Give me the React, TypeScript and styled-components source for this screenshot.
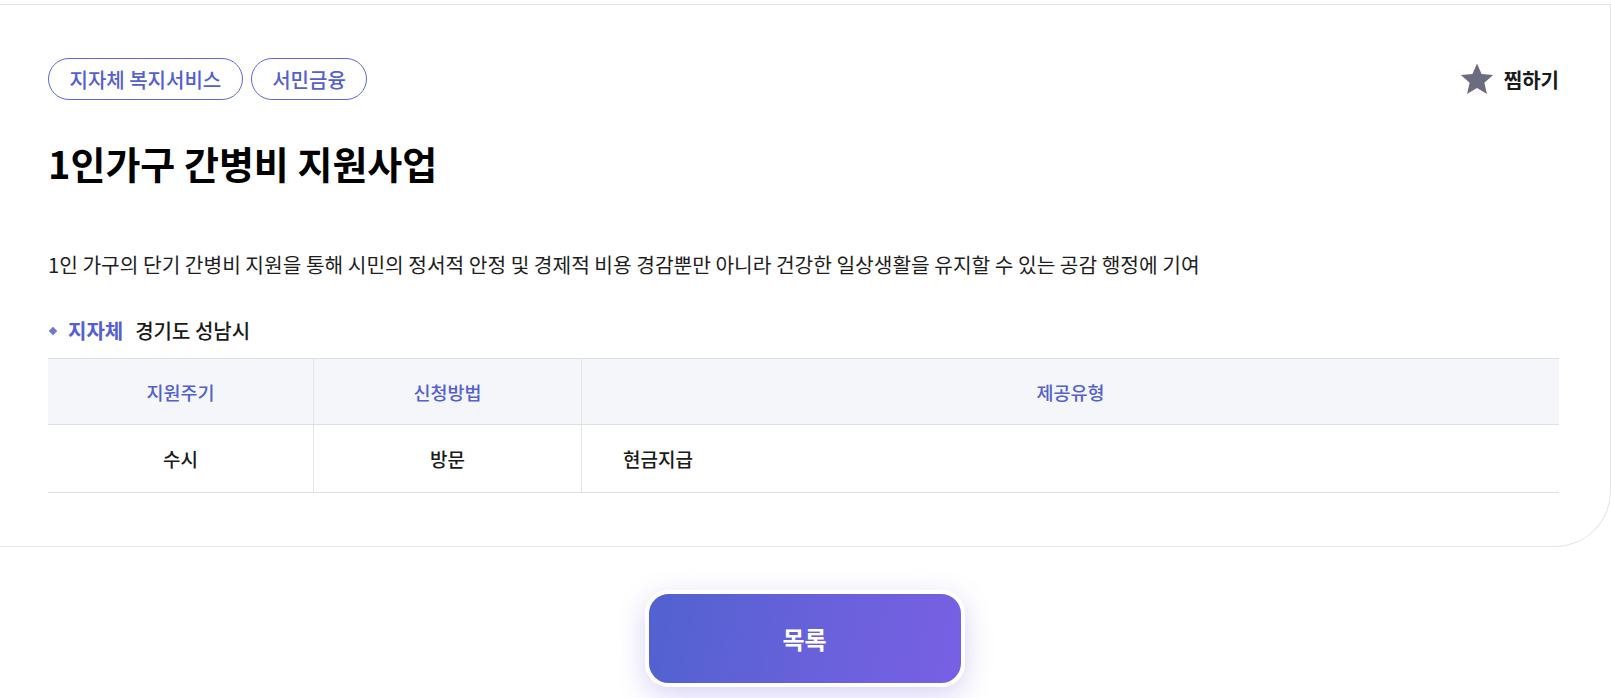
import React from 'react';
import styled, { createGlobalStyle } from 'styled-components';

const GlobalStyle = createGlobalStyle`
  html, body {
    margin: 0;
    padding: 0;
    background: #ffffff;
  }
  body {
    font-family: "Noto Sans CJK KR", "Noto Sans", sans-serif;
    color: #111111;
  }
`;

const Page = styled.div`
  padding-top: 4px;
  overflow: hidden;
`;

const Card = styled.section`
  border-top: 1px solid #e4e4e7;
  border-right: 1px solid #e4e4e7;
  border-bottom: 1px solid #e4e4e7;
  border-bottom-right-radius: 56px;
  padding: 53px 51px 53px 48px;
  background: #ffffff;
`;

const TopRow = styled.div`
  display: flex;
  justify-content: space-between;
  align-items: center;
`;

const Tags = styled.div`
  display: flex;
  gap: 8px;
`;

const Tag = styled.span`
  display: inline-flex;
  align-items: center;
  height: 42px;
  padding: 0 20.5px;
  box-sizing: border-box;
  border: 1px solid #5f6ad6;
  border-radius: 21px;
  color: #5360cf;
  font-size: 20px;
  font-weight: 500;
`;

const Favorite = styled.button`
  display: flex;
  align-items: center;
  gap: 9px;
  padding: 0;
  margin-right: 0;
  border: 0;
  background: none;
  font-family: inherit;
  font-size: 20px;
  font-weight: 600;
  color: #1a1a1a;
  cursor: pointer;
`;

const Title = styled.h1`
  margin: 38px 0 0;
  font-size: 38px;
  font-weight: 700;
  color: #000000;
  line-height: 1.3;
`;

const Description = styled.p`
  margin: 62px 0 0;
  font-size: 20.3px;
  font-weight: 400;
  color: #1e1e1e;
  line-height: 30px;
`;

const Region = styled.div`
  display: flex;
  align-items: center;
  margin-top: 38px;
  font-size: 20px;
  line-height: 1.4;
`;

const Diamond = styled.i`
  width: 6px;
  height: 6px;
  margin: 0 12px 0 2px;
  background: #6c74d8;
  transform: rotate(45deg);
`;

const RegionLabel = styled.span`
  color: #5360cf;
  font-weight: 600;
  margin-right: 12px;
`;

const RegionValue = styled.span`
  color: #1a1a1a;
  font-weight: 500;
`;

const Table = styled.table`
  width: 100%;
  margin-top: 13px;
  border-collapse: collapse;
`;

const HeadCell = styled.th<{ $w?: number }>`
  width: ${(p) => (p.$w ? `${p.$w}px` : 'auto')};
  height: 65px;
  padding: 0;
  background: #f5f6fa;
  color: #5360cf;
  font-size: 18.5px;
  font-weight: 500;
  text-align: center;
  border-top: 1px solid #dedfe4;
  border-bottom: 1px solid #dedfe4;
  & + & {
    border-left: 1px solid #e3e4e8;
  }
`;

const Cell = styled.td<{ $left?: boolean }>`
  height: 67px;
  padding: 0 0 0 ${(p) => (p.$left ? '41px' : '0')};
  color: #1a1a1a;
  font-size: 19px;
  font-weight: 500;
  text-align: ${(p) => (p.$left ? 'left' : 'center')};
  border-bottom: 1px solid #dedfe4;
  & + & {
    border-left: 1px solid #e3e4e8;
  }
`;

const Footer = styled.div`
  display: flex;
  justify-content: center;
  padding: 43px 0 20px;
`;

const ListButton = styled.button`
  width: 320px;
  height: 97px;
  box-sizing: border-box;
  border: 4px solid #ffffff;
  border-radius: 24px;
  background: linear-gradient(100deg, #5162cf 0%, #6b61dc 60%, #7860e4 100%);
  box-shadow: 0 8px 28px rgba(110, 96, 220, 0.28);
  color: #ffffff;
  font-family: inherit;
  font-size: 24px;
  font-weight: 700;
  cursor: pointer;
  margin-left: -2px;
`;

function StarIcon() {
  return (
    <svg width="36" height="36" viewBox="0 0 24 24" aria-hidden="true">
      <path
        d="M12 1.6l3.05 7.1 7.7.67-5.84 5.06 1.75 7.53L12 17.98l-6.66 3.98 1.75-7.53L1.25 9.37l7.7-.67z"
        fill="#6c6c80"
      />
    </svg>
  );
}

export default function App() {
  return (
    <>
      <GlobalStyle />
      <Page>
        <Card>
          <TopRow>
            <Tags>
              <Tag>지자체 복지서비스</Tag>
              <Tag>서민금융</Tag>
            </Tags>
            <Favorite type="button">
              <StarIcon />
              찜하기
            </Favorite>
          </TopRow>
          <Title>1인가구 간병비 지원사업</Title>
          <Description>
            1인 가구의 단기 간병비 지원을 통해 시민의 정서적 안정 및 경제적 비용 경감뿐만 아니라 건강한 일상생활을 유지할 수 있는 공감 행정에 기여
          </Description>
          <Region>
            <Diamond />
            <RegionLabel>지자체</RegionLabel>
            <RegionValue>경기도 성남시</RegionValue>
          </Region>
          <Table>
            <thead>
              <tr>
                <HeadCell $w={265}>지원주기</HeadCell>
                <HeadCell $w={267}>신청방법</HeadCell>
                <HeadCell>제공유형</HeadCell>
              </tr>
            </thead>
            <tbody>
              <tr>
                <Cell>수시</Cell>
                <Cell>방문</Cell>
                <Cell $left>현금지급</Cell>
              </tr>
            </tbody>
          </Table>
        </Card>
        <Footer>
          <ListButton type="button">목록</ListButton>
        </Footer>
      </Page>
    </>
  );
}
